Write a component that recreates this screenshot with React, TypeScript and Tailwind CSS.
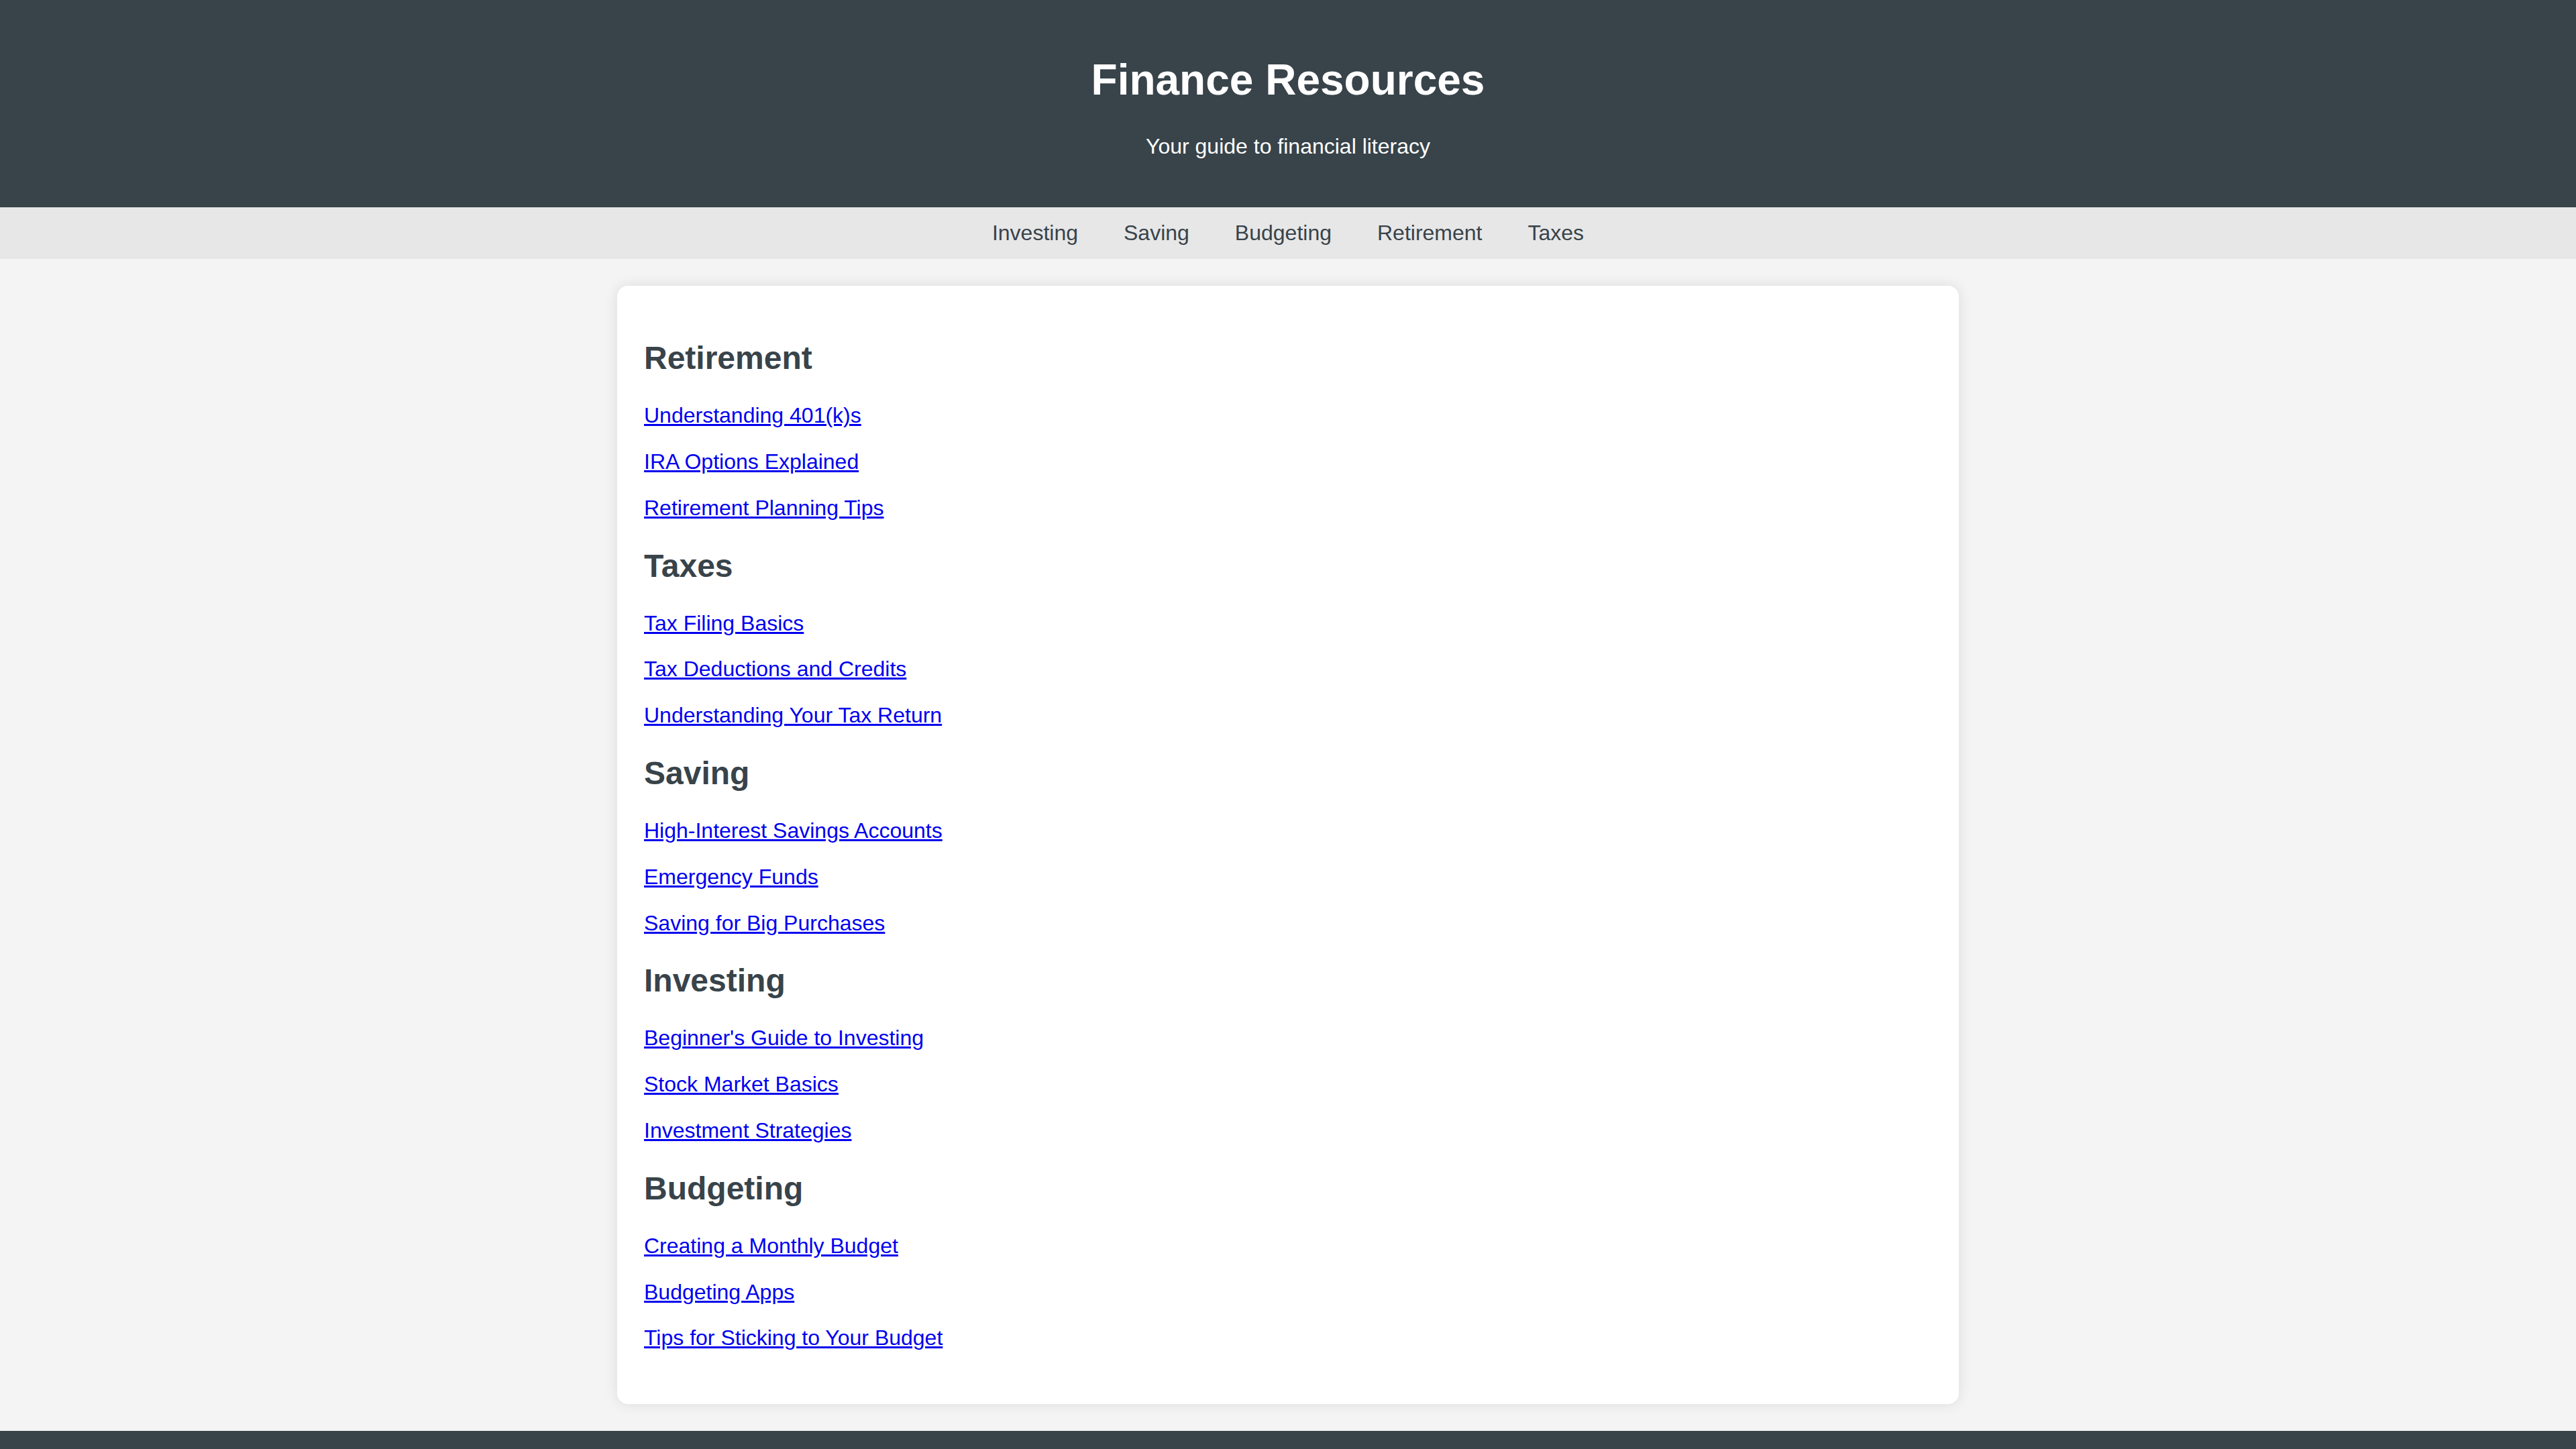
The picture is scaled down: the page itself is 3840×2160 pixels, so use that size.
import React from "react";

const sections = [
  {
    title: "Retirement",
    links: ["Understanding 401(k)s", "IRA Options Explained", "Retirement Planning Tips"],
  },
  {
    title: "Taxes",
    links: ["Tax Filing Basics", "Tax Deductions and Credits", "Understanding Your Tax Return"],
  },
  {
    title: "Saving",
    links: ["High-Interest Savings Accounts", "Emergency Funds", "Saving for Big Purchases"],
  },
  {
    title: "Investing",
    links: ["Beginner's Guide to Investing", "Stock Market Basics", "Investment Strategies"],
  },
  {
    title: "Budgeting",
    links: ["Creating a Monthly Budget", "Budgeting Apps", "Tips for Sticking to Your Budget"],
  },
];

const navItems = ["Investing", "Saving", "Budgeting", "Retirement", "Taxes"];

export default function App() {
  return (
    <div className="min-h-screen bg-[#f4f4f4] font-['Liberation_Sans',Arial,sans-serif] text-[32px] leading-[36.8px] text-[#38434a]">
      {/* Header */}
      <header className="bg-[#38434a] text-white text-center pt-[83px] pb-[73px]">
        <h1 className="text-[64px] leading-[73.6px] font-bold mb-[43px]">Finance Resources</h1>
        <p>Your guide to financial literacy</p>
      </header>

      {/* Nav */}
      <nav className="bg-[#e7e7e7] py-[20px] flex justify-center gap-[68px]">
        {navItems.map((item) => (
          <a key={item} href="#" className="text-[#38434a]">
            {item}
          </a>
        ))}
      </nav>

      {/* Content card */}
      <main className="py-[40px]">
        <div className="w-[2000px] mx-auto bg-white rounded-[16px] shadow-[0_0_20px_rgba(0,0,0,0.1)] px-[40px] pt-[80px] pb-[80px] flex flex-col gap-[40px]">
          {sections.map((section) => (
            <section key={section.title}>
              <h2 className="text-[48px] leading-[55.2px] font-bold mb-[39.8px]">{section.title}</h2>
              <ul className="flex flex-col gap-[32px]">
                {section.links.map((link) => (
                  <li key={link}>
                    <a href="#" className="text-[#0000ee] underline">
                      {link}
                    </a>
                  </li>
                ))}
              </ul>
            </section>
          ))}
        </div>
      </main>

      {/* Footer */}
      <footer className="bg-[#38434a] h-[40px]"></footer>
    </div>
  );
}
